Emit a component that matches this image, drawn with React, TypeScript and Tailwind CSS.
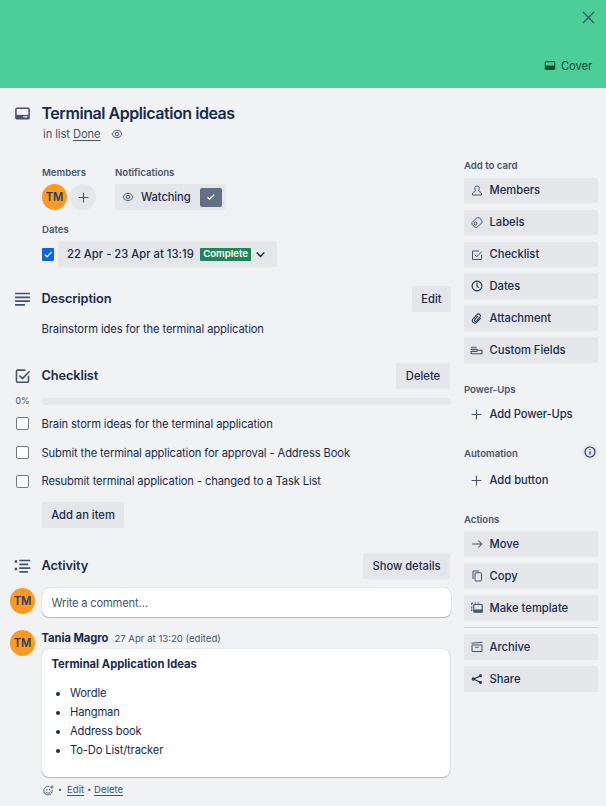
import type { ReactNode } from "react";

type SvgProps = { children: ReactNode; className?: string; w?: number };

function Svg({ children, className = "size-3", w = 2 }: SvgProps) {
  return (
    <svg viewBox="0 0 24 24" fill="none" stroke="currentColor" strokeWidth={w} className={`shrink-0 ${className}`}>
      {children}
    </svg>
  );
}

const Eye = () => (
  <Svg className="size-[12px] text-[#44546f]" w={2}>
    <path d="M2 12C4 7.500 8 4.500 12 4.500S20 7.500 22 12C20 16.500 16 19.500 12 19.500S4 16.500 2 12Z" />
    <circle cx="12" cy="12" r="3.600" />
  </Svg>
);

const Plus = ({ className = "size-[14px]" }: { className?: string }) => (
  <Svg className={className} w={2}>
    <path d="M12 3v18M3 12h18" />
  </Svg>
);

const Avatar = () => (
  <div className="flex h-[26px] w-[25px] shrink-0 items-center justify-center rounded-full bg-[#ff991f] text-[11.200px] font-semibold tracking-[-0.1px] text-[#2c3e5d]">
    TM
  </div>
);

function Button({ children, className = "" }: { children: ReactNode; className?: string }) {
  return (
    <button className={`flex h-[26px] items-center justify-center rounded-[2px] bg-[#e4e6ea] text-[11.2px] font-medium ${className}`}>
      {children}
    </button>
  );
}

function SideButton({ icon, label, className = "h-[26px]", spacing = "" }: { icon: ReactNode; label: string; className?: string; spacing?: string }) {
  return (
    <button className={`flex w-[134px] items-center rounded-[2px] bg-[#e4e6ea] text-[11.2px] font-medium ${className}`}>
      <span className="flex w-[25.5px] justify-center text-[#44546f]">{icon}</span>
      <span className={`whitespace-nowrap ${spacing}`}>{label}</span>
    </button>
  );
}

const SideHeading = ({ children, className = "" }: { children: ReactNode; className?: string }) => (
  <h3 className={`h-4 text-[9.600px] leading-4 font-semibold text-[#44546f] ${className}`}>{children}</h3>
);

const Heading = ({ icon, title, children }: { icon: ReactNode; title: string; children?: ReactNode }) => (
  <div className="flex h-[26px] items-center">
    <span className="flex w-[25px] justify-center text-[#44546f]">{icon}</span>
    <h2 className="ml-[6.500px] flex-1 text-[12.800px] font-semibold tracking-[-0.13px]">{title}</h2>
    {children}
  </div>
);

const items = [
  { text: "Brain storm ideas for the terminal application", nudge: "pt-[2px]" },
  { text: "Submit the terminal application for approval - Address Book", nudge: "pt-[2px]" },
  { text: "Resubmit terminal application - changed to a Task List", nudge: "" },
];

function Main() {
  return (
    <main className="w-[441px] shrink-0">
      <div className="mt-[14px] flex h-[22px] items-center">
        <span className="flex w-[25px] justify-center text-[#44546f]">
          <Svg className="size-[17px]" w={2.2}>
            <rect x="2.700" y="4.500" width="18.600" height="15" rx="1.500" />
            <path d="M3 14h18v5H3Z" fill="currentColor" stroke="none" />
            <path d="M13 16.700h6" stroke="#f1f2f4" strokeWidth="1.800" />
          </Svg>
        </span>
        <h1 className="ml-[6.500px] text-[16px] font-semibold tracking-[-0.450px]">Terminal Application ideas</h1>
      </div>
      <div className="mt-[2px] ml-[33px] flex h-4 items-center text-[11.200px] tracking-[-0.080px] text-[#44546f]">
        <span className="whitespace-pre">in list </span>
        <a className="underline underline-offset-2">Done</a>
        <span className="ml-[10px]"><Eye /></span>
      </div>

      <div className="mt-[23px] ml-[32px] flex">
        <div className="w-[73px]">
          <SideHeading>Members</SideHeading>
          <div className="mt-[3px] flex gap-[3px]">
            <Avatar />
            <button className="flex size-[26px] items-center justify-center rounded-full bg-[#e4e6ea] text-[#44546f]">
              <Plus className="size-[13px]" />
            </button>
          </div>
        </div>
        <div>
          <SideHeading>Notifications</SideHeading>
          <button className="mt-[3px] flex h-[26px] w-[111px] items-center rounded-[2px] bg-[#e4e6ea] pr-1 pl-[7px] text-[11.200px] font-medium">
            <Eye />
            <span className="ml-[7px] flex-1 text-left tracking-[-0.1px]">Watching</span>
            <span className="flex h-[19px] w-[22px] items-center justify-center rounded-[2px] bg-[#626f86] text-white">
              <Svg className="size-[12px]" w={2.5}><path d="m5 12.500 4 4 9.500-9" /></Svg>
            </span>
          </button>
        </div>
      </div>

      <div className="mt-[12px] ml-[32px]">
        <SideHeading>Dates</SideHeading>
        <div className="mt-[3px] flex items-center">
          <span className="flex h-[13px] w-[12px] items-center justify-center rounded-[1px] bg-[#0c66e4] text-white">
            <Svg className="size-[11px]" w={2.6}><path d="m4.500 12.500 4.500 4.500 10-10.500" /></Svg>
          </span>
          <button className="ml-1 flex h-[26px] w-[219px] items-center rounded-[2px] bg-[#e4e6ea] pl-[9px] text-[11.200px] font-medium">
            <span className="w-[133px] text-left whitespace-nowrap tracking-[0.030px]">22 Apr - 23 Apr at 13:19</span>
            <span className="flex h-[13px] w-[51px] items-center justify-center rounded-[1px] bg-[#1f845a] text-[9.600px] font-semibold text-white">Complete</span>
            <Svg className="ml-[3px] size-[13px]" w={2.600}><path d="m5 8.500 7 7 7-7" /></Svg>
          </button>
        </div>
      </div>

      <div className="mt-[19px]">
        <Heading
          title="Description"
          icon={<Svg className="size-[17px]" w={2.200}><path d="M1.500 3.500h21M1.500 9h21M1.500 14.300h21M1.500 19.600h14" /></Svg>}
        >
          <Button className="w-[39px]">Edit</Button>
        </Heading>
        <p className="mt-[9px] ml-[31.500px] h-4 text-[11.200px] leading-4 tracking-[-0.110px]">Brainstorm ides for the terminal application</p>
      </div>

      <div className="mt-[26px]">
        <Heading
          title="Checklist"
          icon={<Svg className="size-[17px]" w={2.200}><path d="M16 3H5q-1.500 0-1.500 1.500v14q0 1.500 1.500 1.500h14q1.500 0 1.500-1.500V11M7.500 10.500l4.500 4.500L22 4.500" /></Svg>}
        >
          <Button className="mr-px w-[54px]">Delete</Button>
        </Heading>
        <div className="mt-[6px] flex h-[12px] items-center">
          <span className="w-[25px] text-center text-[8.800px] text-[#44546f]">0%</span>
          <span className="ml-[7px] h-[7px] flex-1 rounded-full bg-[#e4e6ea]" />
        </div>
        <ul className="mt-[2px]">
          {items.map((item) => (
            <li key={item.text} className="flex h-[29px] items-center">
              <span className="ml-[6px] size-[13px] rounded-[2px] border border-[#76787c] bg-white" />
              <span className={`ml-[12.500px] text-[11.200px] tracking-[-0.120px] whitespace-nowrap ${item.nudge}`}>{item.text}</span>
            </li>
          ))}
        </ul>
        <Button className="mt-[6px] ml-[32px] w-[82px]">Add an item</Button>
      </div>

      <div className="mt-[25px]">
        <Heading
          title="Activity"
          icon={<Svg className="size-[17px]" w={2.200}><path d="M7.500 3.500H23M7.500 9h12.500M7.500 14.300H23M7.500 19.600h12" /><path d="M1 5h3.500M1 15.500h3.500" strokeWidth="3.500" /></Svg>}
        >
          <Button className="mr-px w-[87px]">Show details</Button>
        </Heading>
        <div className="mt-[9px] flex">
          <Avatar />
          <div className="ml-[7px] flex h-[29px] w-[409px] items-center rounded-[7px] bg-white pt-[2px] pl-[9.500px] text-[11.200px] tracking-[-0.200px] text-[#44546f] shadow-[0_1px_1px_#091e4240,0_0_1px_#091e424f]">
            Write a comment…
          </div>
        </div>
        <div className="mt-[13px] flex">
          <Avatar />
          <div className="ml-[7px]">
            <div className="-ml-[0.500px] flex h-4 items-center">
              <b className="pt-px text-[11.200px] font-bold tracking-[-0.050px]">Tania Magro</b>
              <span className="ml-[6px] pt-[2px] text-[9.600px] text-[#44546f]">27 Apr at 13:20 (edited)</span>
            </div>
            <div className="mt-[3px] h-[128px] w-[408px] rounded-[7px] bg-white px-[9.500px] pt-[7px] text-[11.200px] shadow-[0_1px_1px_#091e4240,0_0_1px_#091e424f]">
              <b className="block h-4 leading-4 font-bold">Terminal Application Ideas</b>
              <ul className="mt-[12px] list-disc pl-[18.500px] leading-[19px] tracking-[-0.150px]">
                <li>Wordle</li>
                <li>Hangman</li>
                <li>Address book</li>
                <li>To-Do List/tracker</li>
              </ul>
            </div>
            <div className="mt-[5px] flex h-4 items-center text-[9.600px] text-[#44546f]">
              <Svg className="ml-px size-[11px]" w={1.900}>
                <path d="M14.500 3.800A9.300 9.300 0 1 0 20 10.500M6.500 14.500c2 4.500 8 4.500 10 0M19.500 1v7M16 4.500h7" />
                <path d="M8.500 8.500v3M14.500 8.500v3" strokeWidth="2.500" />
              </Svg>
              <span className="ml-[4px] w-[9px] text-[7px]">•</span>
              <a className="underline underline-offset-2">Edit</a>
              <span className="w-[10px] text-center text-[7px]">•</span>
              <a className="underline underline-offset-2">Delete</a>
            </div>
          </div>
        </div>
      </div>
    </main>
  );
}

function Sidebar() {
  return (
    <aside className="ml-[13px] w-[134px] shrink-0 pt-[70px]">
      <SideHeading>Add to card</SideHeading>
      <div className="mt-1 flex flex-col">
        <SideButton className="h-[25px]" label="Members" icon={<Svg><path d="M12 2c-3 0-4.500 2-4.500 4.500S9 11 9 12C7.500 13.500 3 14 3 18v2h18v-2c0-4-4.500-4.500-6-6 0-1 1.500-3 1.500-5.500S15 2 12 2Z" /></Svg>} />
        <SideButton className="mt-[7px] h-[25px]" label="Labels" icon={<Svg className="size-[12px]"><path d="m2 11 8.500-8.500q1-1 2.500-1h4L22 7.500v4L13 19.500c-2 2-4 2-6 0l-3.500-3c-1.500-2-2-3.500-1.500-5.500Z" /><circle cx="9" cy="13" r="2.800" /></Svg>} />
        <SideButton className="mt-[7px] h-[25px]" label="Checklist" icon={<Svg><path d="M16 4H3v17h18v-9M7.500 11.500l4 4L21.500 5" /></Svg>} />
        <SideButton className="mt-[6px] h-[26px]" label="Dates" icon={<Svg className="size-3 text-[#172b4d]" w={2.200}><circle cx="12" cy="12" r="9.800" /><path d="M12 5.500V12l3.500 4" /></Svg>} />
        <SideButton className="mt-[6px] h-[26px]" label="Attachment" icon={<Svg className="size-[11px] text-[#172b4d]" w={2.200}><path d="m21 11.500-8 8.500a5.500 5.500 0 0 1-8.500-7.500l8.500-9a4.200 4.200 0 0 1 6.500 5.500l-8 8.500a2.300 2.300 0 0 1-3.500-3l7-7.500" /></Svg>} />
        <SideButton className="mt-[6px] h-[26px]" label="Custom Fields" icon={<Svg className="size-[13px]" w={2.200}><path d="M2 6h10M1.500 10h11l2 1.500H22V18H4q-2 0-2-2v-2.500h12" /></Svg>} />
      </div>

      <SideHeading className="mt-[19px]">Power-Ups</SideHeading>
      <button className="mt-[3px] flex h-[26px] items-center text-[11.200px] font-medium tracking-[-0.100px]">
        <span className="flex w-[25.500px] justify-center text-[#44546f]"><Plus className="size-[13px]" /></span>
        Add Power-Ups
      </button>

      <div className="mt-[18px] flex h-[17px] items-center justify-between">
        <SideHeading>Automation</SideHeading>
        <span className="-mt-[3px] flex size-[16px] items-center justify-center rounded-full bg-[#e4e6ea]">
          <Svg className="size-[12px]" w={2.100}><circle cx="12" cy="12" r="10" /><path d="M12 10.500V17M12 6.500v2" /></Svg>
        </span>
      </div>
      <button className="mt-[5px] flex h-[26px] items-center text-[11.200px] font-medium">
        <span className="flex w-[25.500px] justify-center text-[#44546f]"><Plus className="size-[13px]" /></span>
        Add button
      </button>

      <SideHeading className="mt-[19px]">Actions</SideHeading>
      <div className="mt-[3px] flex flex-col gap-[6px]">
        <SideButton label="Move" icon={<Svg className="size-[12px]" w={2.100}><path d="M2.500 12h19M14.500 5l7 7-7 7" /></Svg>} />
        <SideButton label="Copy" icon={<Svg><rect x="8" y="5.500" width="13" height="16.500" rx="1.500" /><path d="M4 18V2h12" /></Svg>} />
        <SideButton label="Make template" icon={<Svg w={2.300}><path d="M1 2h3M7 2h3M13 2h3M1.500 2v4M1.500 9v4M1.500 15v3" /><rect x="5.500" y="5" width="17" height="15.500" rx="1" /><path d="M6 15h17v5.500H6Z" fill="currentColor" stroke="none" /></Svg>} />
        <hr className="h-px border-0 bg-[#cdd1d8]" />
        <SideButton label="Archive" icon={<Svg><path d="M1 4.500 23 2.500M2 8h20v13H2ZM8.500 12.500h7" /></Svg>} />
        <SideButton label="Share" icon={<Svg className="size-[12px] text-[#172b4d]" w={2.200}><path d="m5 12 14-6M5 12l14 7" /><circle cx="4.500" cy="12" r="2.200" /><circle cx="19" cy="5.500" r="1.800" /><circle cx="19" cy="19" r="1.800" /></Svg>} />
      </div>
    </aside>
  );
}

export default function App() {
  return (
    <div className="h-[806px] w-[606px] overflow-hidden bg-[#f1f2f4] font-['Inter',sans-serif] text-[#172b4d]">
      <header className="flex h-[88px] flex-col items-end bg-[#4bce97] pt-[11px]">
        <Svg className="mr-[11px] size-[13px] text-[#44546f]" w={2.400}><path d="m2 2 20 20M22 2 2 22" /></Svg>
        <button className="mt-[34px] mr-[14px] flex h-4 items-center text-[11.200px] tracking-[-0.100px] text-[#164b35]">
          <Svg className="size-[12px]" w={2}><rect x="2.500" y="3.500" width="19" height="15" rx="1" /><path d="M3 12h18v6H3Z" fill="currentColor" /></Svg>
          <span className="ml-[5px] pt-px">Cover</span>
        </button>
      </header>
      <div className="flex pl-[10px]">
        <Main />
        <Sidebar />
      </div>
    </div>
  );
}
